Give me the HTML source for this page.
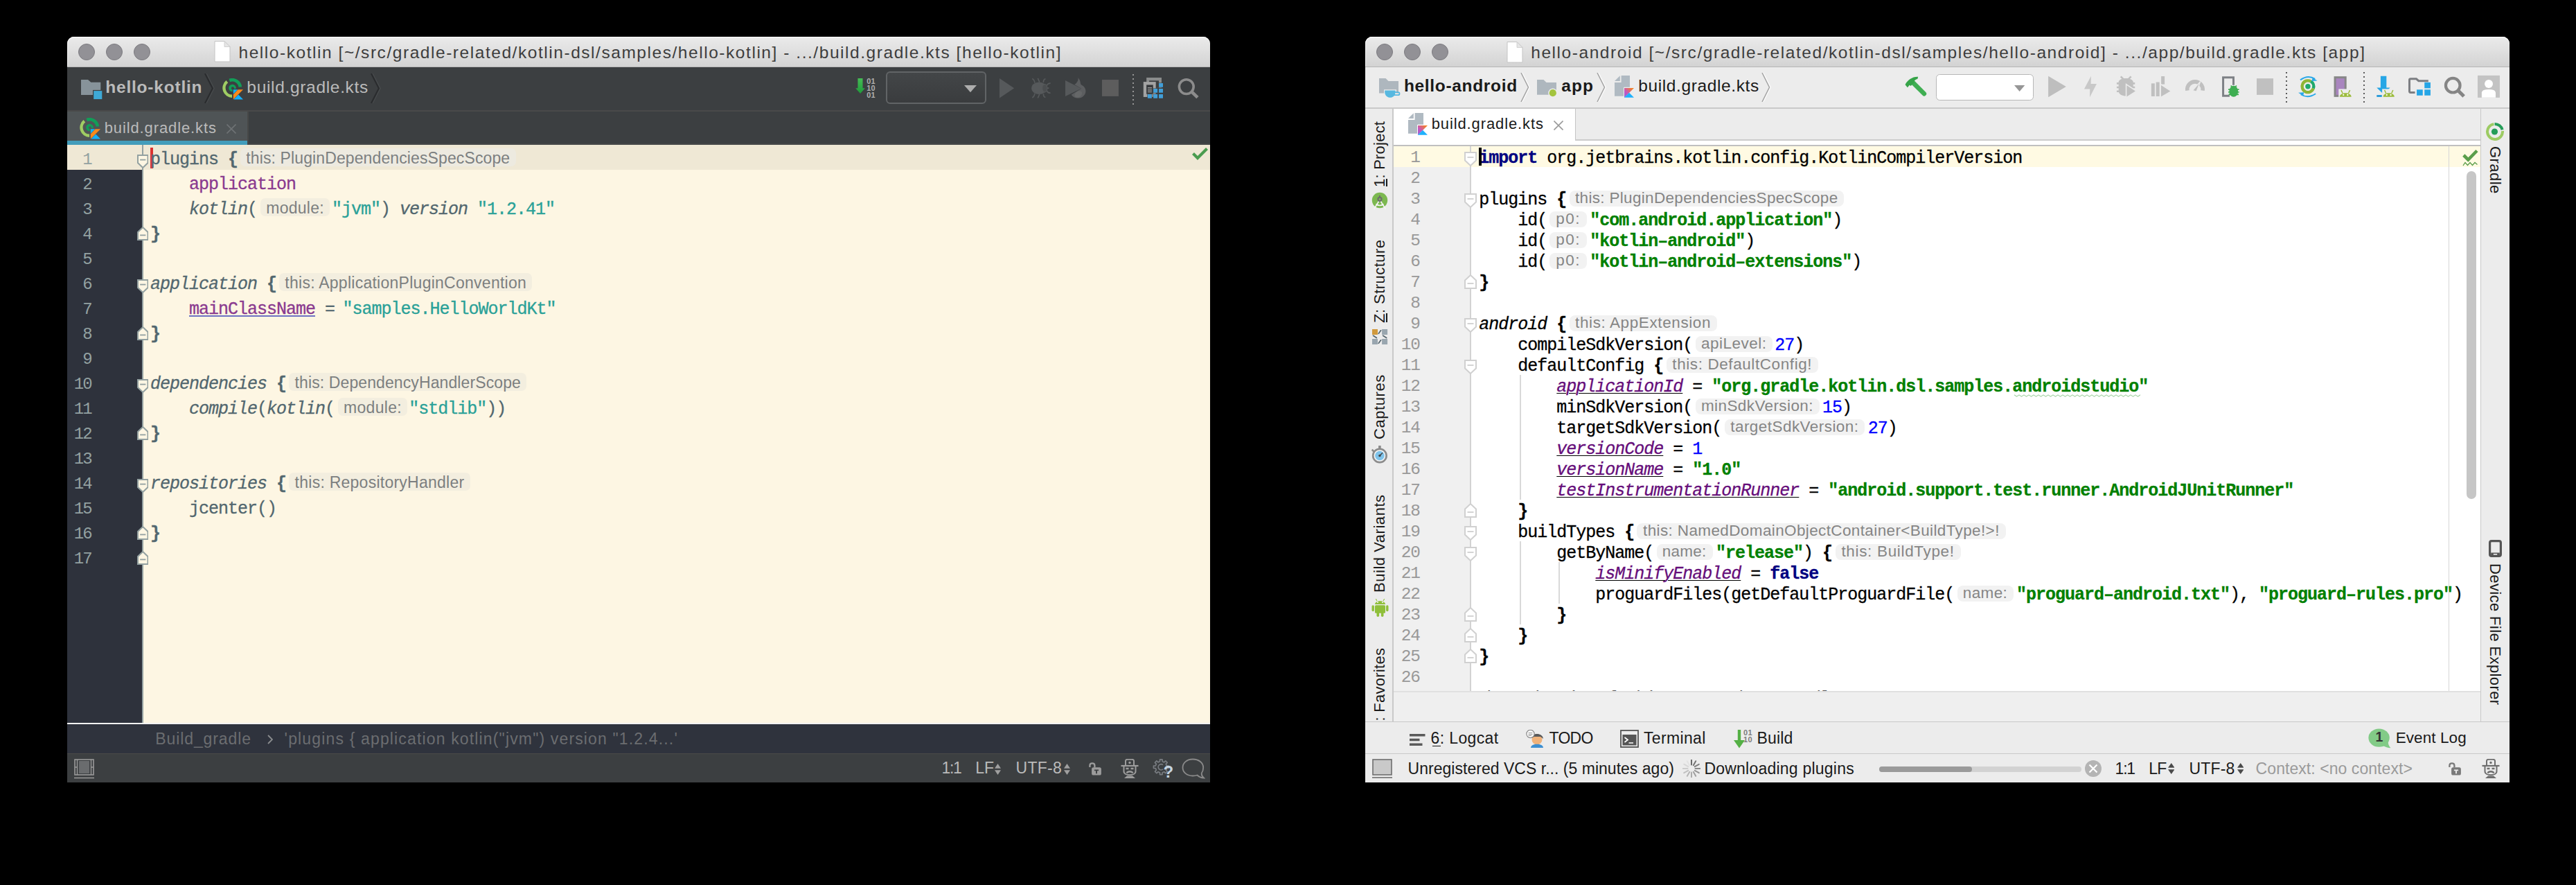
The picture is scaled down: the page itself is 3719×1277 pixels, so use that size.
<!DOCTYPE html>
<html><head><meta charset="utf-8"><title>IDE</title>
<style>
html,body{margin:0;padding:0;background:#000;}
body{width:3719px;height:1277px;position:relative;overflow:hidden;font-family:"Liberation Sans",sans-serif;}
div,span,svg{position:absolute;box-sizing:border-box;}
span{white-space:pre;line-height:1;}
.w{overflow:hidden;}
</style></head><body>
<div class="w" style="left:97px;top:53px;width:1650px;height:1076px;background:#3c3f41;border-radius:10px 10px 0 0;"></div>
<div style="left:97px;top:53px;width:1650px;height:44px;background:linear-gradient(#ebebeb,#d3d3d3);border-radius:10px 10px 0 0;border-bottom:1px solid #b8b8b8;box-shadow:inset 0 1.2px 0 #f8f8f8, inset 1px 0 0 #f2f2f2;"></div>
<div style="left:113px;top:62.7px;width:24px;height:24px;border-radius:50%;background:#929196;border:1.5px solid #7c7b80;"></div>
<div style="left:153px;top:62.7px;width:24px;height:24px;border-radius:50%;background:#929196;border:1.5px solid #7c7b80;"></div>
<div style="left:193px;top:62.7px;width:24px;height:24px;border-radius:50%;background:#929196;border:1.5px solid #7c7b80;"></div>
<svg style="left:309px;top:59px;" width="24" height="31" viewBox="0 0 24 31"><path d="M1 0.5 H15 L23 8.5 V30 H1 Z" fill="#fff" stroke="#c4c4c4" stroke-width="1"/><path d="M15 0.5 V8.5 H23 Z" fill="#e6e6e6" stroke="#c9c9c9" stroke-width="0.8"/></svg>
<span style="left:344.53px;top:64.38px;font-family:'Liberation Sans';font-size:24.5px;color:#3d3d3d;letter-spacing:1.547px;">hello-kotlin [~/src/gradle-related/kotlin-dsl/samples/hello-kotlin] - .../build.gradle.kts [hello-kotlin]</span>
<div style="left:97px;top:97px;width:1650px;height:62px;background:#3c3f41;"></div>
<div style="left:97px;top:159px;width:1650px;height:2px;background:#4a4a4a;"></div>
<svg style="left:116.8px;top:114.9px;" width="31" height="29" viewBox="0 0 31 29"><path d="M0 0 H10 L14.3 3.7 H28.3 V22 H0 Z" fill="#87939a"/><rect x="17" y="14.9" width="14" height="14" fill="#3c3f41"/><rect x="18.2" y="16.1" width="12.1" height="12" fill="#3ea9d6"/></svg>
<span style="left:152.23px;top:113.98px;font-family:'Liberation Sans';font-size:24.5px;color:#bbbbbb;font-weight:700;letter-spacing:0.790px;">hello-kotlin</span>
<svg style="left:294.5px;top:106px;" width="15" height="43" viewBox="0 0 15 43"><path d="M2.6 0 L13.6 21.5 L2.6 43" stroke="#484b4d" stroke-width="2.2" fill="none"/><path d="M1 0 L12 21.5 L1 43" stroke="#2a2c2e" stroke-width="2.2" fill="none"/></svg>
<svg style="left:320.9px;top:112.7px;" width="31" height="31" viewBox="0 0 31 31"><path d="M14.09 25.80 A11.8 11.8 0 0 1 6.87 4.83" stroke="#9fcd63" stroke-width="4.4" fill="none"/><path d="M10.30 3.01 A11.7 11.7 0 0 1 25.91 12.57" stroke="#129d58" stroke-width="4.7" fill="none"/><circle cx="14.5" cy="14.0" r="5.3" fill="#129d58"/><circle cx="14.9" cy="14.2" r="2" fill="#3c3f41"/><rect x="14.600000000000001" y="15.0" width="16.599999999999998" height="16.599999999999998" fill="#3c3f41"/><polygon points="15.8,16.2 22.332,16.2 15.8,22.732" fill="#12b0ff"/><polygon points="22.616,16.2 30.0,16.2 15.8,30.4 15.8,23.584" fill="#f88a1c"/><polygon points="16.368000000000002,30.4 23.184,23.584 30.0,30.4" fill="#12b0ff"/></svg>
<span style="left:356.33px;top:113.98px;font-family:'Liberation Sans';font-size:24.5px;color:#bbbbbb;letter-spacing:0.678px;">build.gradle.kts</span>
<svg style="left:534.5px;top:106px;" width="15" height="43" viewBox="0 0 15 43"><path d="M2.6 0 L13.6 21.5 L2.6 43" stroke="#484b4d" stroke-width="2.2" fill="none"/><path d="M1 0 L12 21.5 L1 43" stroke="#2a2c2e" stroke-width="2.2" fill="none"/></svg>
<svg style="left:1225px;top:98px;" width="522" height="60" viewBox="1225 98 522 60"><defs><linearGradient id="ga" x1="0" y1="0" x2="0" y2="1"><stop offset="0" stop-color="#45bd55"/><stop offset="1" stop-color="#1f9a3a"/></linearGradient></defs><path d="M1238.42 112.91 H1245.5 V127.19 H1248.85 L1242.02 134.89 L1235.19 127.19 H1238.42 Z" fill="url(#ga)"/><path d="M1443.01 112.91 L1464.13 127.19 L1443.01 141.48 Z" fill="#56595b"/><ellipse cx="1500.16" cy="127.19" rx="11" ry="8.8" fill="#56595b"/><ellipse cx="1508.23" cy="127.19" rx="3.6" ry="5.6" fill="#4b4e50" stroke="#56595b" stroke-width="1.2"/><path d="M1493.94 119.74 Q1493.32 114.77 1490.22 113.53 M1500.78 118.5 L1498.29 112.91 M1506.37 119.12 Q1506.37 114.15 1509.47 113.9 M1493.94 134.65 Q1493.32 139.61 1490.22 140.86 M1500.78 135.89 L1498.29 141.48 M1506.37 135.27 Q1506.37 140.24 1509.47 140.48 M1511.34 123.47 Q1512.58 120.11 1516.68 120.11 M1511.96 127.19 H1514.44 M1511.34 130.92 Q1512.58 134.27 1516.68 134.27" stroke="#56595b" stroke-width="1.7" fill="none"/><path d="M1537.93 115.91 L1561.25 127.7 L1537.93 139.05 Z" fill="#56595b"/><path d="M1556.44 111.98 C1561.68 118.09 1558.19 121.58 1562.56 123.33 C1568.67 126.82 1569.55 135.56 1562.56 139.93 C1557.32 142.98 1549.46 141.67 1546.84 136.43 L1561.25 127.7 L1551.2 122.02 C1554.7 119.84 1557.32 116.34 1556.44 111.98 Z" fill="#5c5e60"/><ellipse cx="1556.88" cy="135.99" rx="5.8" ry="4.2" fill="#656768" transform="rotate(-35 1556.88 135.99)"/><rect x="1590.94" y="115.03" width="24.019999999999982" height="23.849999999999994" fill="#5d5d5d"/><path d="M1655.14 118.96 V111.98 H1676.98 V119.84" stroke="#8a8c8c" stroke-width="0" fill="none"/><rect x="1655.14" y="111.98" width="21.839999999999918" height="14.83999999999999" fill="#8a8c8c"/><rect x="1659.07" y="116.34" width="13.980000000000018" height="10.47999999999999" fill="#3c3f41"/><rect x="1650.78" y="118.09" width="17.90000000000009" height="21.840000000000003" fill="#a3a3a3"/><rect x="1655.14" y="122.46" width="9.6099999999999" height="13.269999999999996" fill="#34373a"/><rect x="1656.89" y="125.95" width="6.1099999999999" height="1" fill="#a3a3a3"/><rect x="1656.89" y="128.13" width="6.1099999999999" height="1" fill="#a3a3a3"/><rect x="1656.89" y="130.32" width="6.1099999999999" height="1" fill="#a3a3a3"/><rect x="1656.89" y="132.33" width="6.1099999999999" height="1" fill="#a3a3a3"/><rect x="1672.55" y="119.51" width="6.940000000000055" height="6.769999999999996" fill="#3c3f41"/><rect x="1673.05" y="120.01" width="5.940000000000055" height="5.769999999999996" fill="#419fd9"/><rect x="1664.69" y="127.46" width="6.940000000000055" height="6.760000000000005" fill="#3c3f41"/><rect x="1665.19" y="127.96" width="5.940000000000055" height="5.760000000000005" fill="#419fd9"/><rect x="1672.55" y="127.46" width="6.940000000000055" height="6.760000000000005" fill="#3c3f41"/><rect x="1673.05" y="127.96" width="5.940000000000055" height="5.760000000000005" fill="#419fd9"/><rect x="1656.39" y="135.49" width="6.939999999999827" height="6.769999999999982" fill="#3c3f41"/><rect x="1656.89" y="135.99" width="5.939999999999827" height="5.769999999999982" fill="#419fd9"/><rect x="1664.69" y="135.49" width="6.940000000000055" height="6.769999999999982" fill="#3c3f41"/><rect x="1665.19" y="135.99" width="5.940000000000055" height="5.769999999999982" fill="#419fd9"/><rect x="1672.55" y="135.49" width="6.940000000000055" height="6.769999999999982" fill="#3c3f41"/><rect x="1673.05" y="135.99" width="5.940000000000055" height="5.769999999999982" fill="#419fd9"/><circle cx="1712.79" cy="125.08" r="10.4" stroke="#8c8c8c" stroke-width="3.6" fill="none"/><path d="M1720.21 132.24 L1728.95 140.62" stroke="#8c8c8c" stroke-width="4.6"/></svg>
<span style="left:1251.20px;top:111.82px;font-family:'Liberation Sans';font-size:10.8px;color:#b0b0b0;font-weight:700;letter-spacing:0.392px;">01</span>
<span style="left:1251.20px;top:121.82px;font-family:'Liberation Sans';font-size:10.8px;color:#b0b0b0;font-weight:700;letter-spacing:0.392px;">10</span>
<span style="left:1251.20px;top:131.82px;font-family:'Liberation Sans';font-size:10.8px;color:#b0b0b0;font-weight:700;letter-spacing:0.392px;">01</span>
<div style="left:1278.8px;top:103.2px;width:145.6px;height:47px;border:2px solid #616466;border-radius:6px;background:linear-gradient(#434648,#3a3c3e);"></div>
<svg style="left:1392px;top:122.8px;" width="18" height="10.2" viewBox="0 0 18 10.2"><path d="M0 0 H18 L9 10.2 Z" fill="#adadad"/></svg>
<div style="left:1634.9px;top:106.9px;width:2.2px;height:44.06px;background:repeating-linear-gradient(to bottom,#969696 0,#969696 2.2px,transparent 2.2px,transparent 5.98px);"></div>
<div style="left:97px;top:161px;width:1650px;height:48px;background:#3c3f41;"></div>
<div style="left:97px;top:207.2px;width:1650px;height:1.8px;background:#464848;"></div>
<div style="left:97px;top:161px;width:260.2px;height:42.2px;background:#4f5456;"></div>
<div style="left:357.2px;top:161px;width:2px;height:48px;background:#474848;"></div>
<div style="left:97px;top:203px;width:260.2px;height:6px;background:#439dbb;"></div>
<svg style="left:114.7px;top:170.4px;" width="31" height="31" viewBox="0 0 31 31"><path d="M14.09 25.80 A11.8 11.8 0 0 1 6.87 4.83" stroke="#9fcd63" stroke-width="4.4" fill="none"/><path d="M10.30 3.01 A11.7 11.7 0 0 1 25.91 12.57" stroke="#129d58" stroke-width="4.7" fill="none"/><circle cx="14.5" cy="14.0" r="5.3" fill="#129d58"/><circle cx="14.9" cy="14.2" r="2" fill="#4f5456"/><rect x="14.600000000000001" y="15.0" width="16.599999999999998" height="16.599999999999998" fill="#4f5456"/><polygon points="15.8,16.2 22.332,16.2 15.8,22.732" fill="#12b0ff"/><polygon points="22.616,16.2 30.0,16.2 15.8,30.4 15.8,23.584" fill="#f88a1c"/><polygon points="16.368000000000002,30.4 23.184,23.584 30.0,30.4" fill="#12b0ff"/></svg>
<span style="left:150.68px;top:174.30px;font-family:'Liberation Sans';font-size:22px;color:#bbbbbb;letter-spacing:0.888px;">build.gradle.kts</span>
<svg style="left:327px;top:179.3px;" width="14" height="14" viewBox="0 0 14 14"><path d="M0.5 0.5 L13.5 13.5 M13.5 0.5 L0.5 13.5" stroke="#6e7274" stroke-width="1.7"/></svg>
<div style="left:97px;top:209px;width:109px;height:834px;background:#2e323c;"></div>
<div style="left:206px;top:209px;width:1541px;height:834px;background:#fdf6e3;"></div>
<div style="left:97px;top:209px;width:1650px;height:36px;background:#efe8d5;"></div>
<div style="left:204.8px;top:209px;width:2.2px;height:834px;background:#93a1a1;"></div>
<svg style="left:1721px;top:213px;" width="23" height="18" viewBox="0 0 23 18"><path d="M1.5 8.5 L8 15 L21.5 1.5" stroke="#4a9c4f" stroke-width="4.2" fill="none"/></svg>
<span style="left:119.30px;top:218.96px;font-family:'Liberation Mono';font-size:24px;color:#93a1a1;letter-spacing:-1.806px;">1</span>
<span style="left:119.30px;top:254.96px;font-family:'Liberation Mono';font-size:24px;color:#93a1a1;letter-spacing:-1.806px;">2</span>
<span style="left:119.30px;top:290.96px;font-family:'Liberation Mono';font-size:24px;color:#93a1a1;letter-spacing:-1.806px;">3</span>
<span style="left:119.30px;top:326.96px;font-family:'Liberation Mono';font-size:24px;color:#93a1a1;letter-spacing:-1.806px;">4</span>
<span style="left:119.30px;top:362.96px;font-family:'Liberation Mono';font-size:24px;color:#93a1a1;letter-spacing:-1.806px;">5</span>
<span style="left:119.30px;top:398.96px;font-family:'Liberation Mono';font-size:24px;color:#93a1a1;letter-spacing:-1.806px;">6</span>
<span style="left:119.30px;top:434.96px;font-family:'Liberation Mono';font-size:24px;color:#93a1a1;letter-spacing:-1.806px;">7</span>
<span style="left:119.30px;top:470.96px;font-family:'Liberation Mono';font-size:24px;color:#93a1a1;letter-spacing:-1.806px;">8</span>
<span style="left:119.30px;top:506.96px;font-family:'Liberation Mono';font-size:24px;color:#93a1a1;letter-spacing:-1.806px;">9</span>
<span style="left:106.70px;top:542.96px;font-family:'Liberation Mono';font-size:24px;color:#93a1a1;letter-spacing:-1.806px;">10</span>
<span style="left:106.70px;top:578.96px;font-family:'Liberation Mono';font-size:24px;color:#93a1a1;letter-spacing:-1.806px;">11</span>
<span style="left:106.70px;top:614.96px;font-family:'Liberation Mono';font-size:24px;color:#93a1a1;letter-spacing:-1.806px;">12</span>
<span style="left:106.70px;top:650.96px;font-family:'Liberation Mono';font-size:24px;color:#93a1a1;letter-spacing:-1.806px;">13</span>
<span style="left:106.70px;top:686.96px;font-family:'Liberation Mono';font-size:24px;color:#93a1a1;letter-spacing:-1.806px;">14</span>
<span style="left:106.70px;top:722.96px;font-family:'Liberation Mono';font-size:24px;color:#93a1a1;letter-spacing:-1.806px;">15</span>
<span style="left:106.70px;top:758.96px;font-family:'Liberation Mono';font-size:24px;color:#93a1a1;letter-spacing:-1.806px;">16</span>
<span style="left:106.70px;top:794.96px;font-family:'Liberation Mono';font-size:24px;color:#93a1a1;letter-spacing:-1.806px;">17</span>
<div style="left:217px;top:213.3px;width:4px;height:29.6px;background:#dc322f;"></div>
<span style="left:217.00px;top:218.20px;font-family:'Liberation Mono';font-size:25px;color:#52676f;letter-spacing:-1.004px;-webkit-text-stroke:0.3px;">plugins </span>
<span style="left:329.00px;top:218.20px;font-family:'Liberation Mono';font-size:25px;color:#52676f;font-weight:700;letter-spacing:-1.016px;-webkit-text-stroke:0.3px;">{</span>
<div style="left:347px;top:213.6px;width:397.70000000000005px;height:26.4px;background:#edeae0;border-radius:7px;"></div>
<span style="left:355.32px;top:216.65px;font-family:'Liberation Sans';font-size:23px;color:#7c7f80;letter-spacing:0.112px;">this: PluginDependenciesSpecScope</span>
<span style="left:273.00px;top:254.20px;font-family:'Liberation Mono';font-size:25px;color:#8a3a8f;letter-spacing:-1.003px;-webkit-text-stroke:0.3px;">application</span>
<span style="left:273.00px;top:290.20px;font-family:'Liberation Mono';font-size:25px;color:#52676f;font-style:italic;letter-spacing:-1.003px;-webkit-text-stroke:0.3px;">kotlin</span>
<span style="left:357.00px;top:290.20px;font-family:'Liberation Mono';font-size:25px;color:#52676f;letter-spacing:-1.016px;-webkit-text-stroke:0.3px;">(</span>
<div style="left:375.5px;top:285.6px;width:100.5px;height:26.4px;background:#f3eedf;border-radius:7px;"></div>
<span style="left:384.22px;top:288.65px;font-family:'Liberation Sans';font-size:23px;color:#7c7f80;letter-spacing:0.267px;">module:</span>
<span style="left:478.90px;top:290.20px;font-family:'Liberation Mono';font-size:25px;color:#2aa198;letter-spacing:-1.003px;-webkit-text-stroke:0.3px;">"jvm"</span>
<span style="left:548.90px;top:290.20px;font-family:'Liberation Mono';font-size:25px;color:#52676f;letter-spacing:-1.008px;-webkit-text-stroke:0.3px;">) </span>
<span style="left:576.90px;top:290.20px;font-family:'Liberation Mono';font-size:25px;color:#52676f;font-style:italic;letter-spacing:-1.004px;-webkit-text-stroke:0.3px;">version</span>
<span style="left:688.90px;top:290.20px;font-family:'Liberation Mono';font-size:25px;color:#2aa198;letter-spacing:-1.004px;-webkit-text-stroke:0.3px;">"1.2.41"</span>
<span style="left:217.00px;top:326.20px;font-family:'Liberation Mono';font-size:25px;color:#52676f;font-weight:700;letter-spacing:-1.016px;-webkit-text-stroke:0.3px;">}</span>
<span style="left:217.00px;top:398.20px;font-family:'Liberation Mono';font-size:25px;color:#52676f;font-style:italic;letter-spacing:-1.003px;-webkit-text-stroke:0.3px;">application</span>
<span style="left:385.00px;top:398.20px;font-family:'Liberation Mono';font-size:25px;color:#52676f;font-weight:700;letter-spacing:-1.016px;-webkit-text-stroke:0.3px;">{</span>
<div style="left:403px;top:393.6px;width:365.20000000000005px;height:26.4px;background:#f3eedf;border-radius:7px;"></div>
<span style="left:411.32px;top:396.65px;font-family:'Liberation Sans';font-size:23px;color:#7c7f80;letter-spacing:0.263px;">this: ApplicationPluginConvention</span>
<span style="left:273.00px;top:434.20px;font-family:'Liberation Mono';font-size:25px;color:#8a3a8f;letter-spacing:-1.004px;-webkit-text-stroke:0.3px;text-decoration:underline;text-decoration-color:#6c71c4;text-decoration-thickness:2px;text-underline-offset:2px;">mainClassName</span>
<span style="left:455.00px;top:434.20px;font-family:'Liberation Mono';font-size:25px;color:#52676f;letter-spacing:-1.005px;-webkit-text-stroke:0.3px;"> = </span>
<span style="left:494.50px;top:434.20px;font-family:'Liberation Mono';font-size:25px;color:#2aa198;letter-spacing:-1.003px;-webkit-text-stroke:0.3px;">"samples.HelloWorldKt"</span>
<span style="left:217.00px;top:470.20px;font-family:'Liberation Mono';font-size:25px;color:#52676f;font-weight:700;letter-spacing:-1.016px;-webkit-text-stroke:0.3px;">}</span>
<span style="left:217.00px;top:542.20px;font-family:'Liberation Mono';font-size:25px;color:#52676f;font-style:italic;letter-spacing:-1.003px;-webkit-text-stroke:0.3px;">dependencies</span>
<span style="left:399.00px;top:542.20px;font-family:'Liberation Mono';font-size:25px;color:#52676f;font-weight:700;letter-spacing:-1.016px;-webkit-text-stroke:0.3px;">{</span>
<div style="left:417px;top:537.6px;width:343px;height:26.4px;background:#f3eedf;border-radius:7px;"></div>
<span style="left:425.62px;top:540.65px;font-family:'Liberation Sans';font-size:23px;color:#7c7f80;letter-spacing:0.101px;">this: DependencyHandlerScope</span>
<span style="left:273.00px;top:578.20px;font-family:'Liberation Mono';font-size:25px;color:#52676f;font-style:italic;letter-spacing:-1.004px;-webkit-text-stroke:0.3px;">compile</span>
<span style="left:371.00px;top:578.20px;font-family:'Liberation Mono';font-size:25px;color:#52676f;letter-spacing:-1.016px;-webkit-text-stroke:0.3px;">(</span>
<span style="left:385.00px;top:578.20px;font-family:'Liberation Mono';font-size:25px;color:#52676f;font-style:italic;letter-spacing:-1.003px;-webkit-text-stroke:0.3px;">kotlin</span>
<span style="left:469.00px;top:578.20px;font-family:'Liberation Mono';font-size:25px;color:#52676f;letter-spacing:-1.016px;-webkit-text-stroke:0.3px;">(</span>
<div style="left:487.6px;top:573.6px;width:100.39999999999998px;height:26.4px;background:#f3eedf;border-radius:7px;"></div>
<span style="left:496.12px;top:576.65px;font-family:'Liberation Sans';font-size:23px;color:#7c7f80;letter-spacing:0.282px;">module:</span>
<span style="left:590.30px;top:578.20px;font-family:'Liberation Mono';font-size:25px;color:#2aa198;letter-spacing:-1.004px;-webkit-text-stroke:0.3px;">"stdlib"</span>
<span style="left:702.30px;top:578.20px;font-family:'Liberation Mono';font-size:25px;color:#52676f;letter-spacing:-1.008px;-webkit-text-stroke:0.3px;">))</span>
<span style="left:217.00px;top:614.20px;font-family:'Liberation Mono';font-size:25px;color:#52676f;font-weight:700;letter-spacing:-1.016px;-webkit-text-stroke:0.3px;">}</span>
<span style="left:217.00px;top:686.20px;font-family:'Liberation Mono';font-size:25px;color:#52676f;font-style:italic;letter-spacing:-1.003px;-webkit-text-stroke:0.3px;">repositories</span>
<span style="left:399.00px;top:686.20px;font-family:'Liberation Mono';font-size:25px;color:#52676f;font-weight:700;letter-spacing:-1.016px;-webkit-text-stroke:0.3px;">{</span>
<div style="left:417px;top:681.6px;width:261.5px;height:26.4px;background:#f3eedf;border-radius:7px;"></div>
<span style="left:425.62px;top:684.65px;font-family:'Liberation Sans';font-size:23px;color:#7c7f80;letter-spacing:0.249px;">this: RepositoryHandler</span>
<span style="left:273.00px;top:722.20px;font-family:'Liberation Mono';font-size:25px;color:#52676f;letter-spacing:-1.003px;-webkit-text-stroke:0.3px;">jcenter()</span>
<span style="left:217.00px;top:758.20px;font-family:'Liberation Mono';font-size:25px;color:#52676f;font-weight:700;letter-spacing:-1.016px;-webkit-text-stroke:0.3px;">}</span>
<svg style="left:197.75px;top:223.0px;" width="16.5" height="20" viewBox="0 0 16.5 20"><path d="M1 1 H15.5 V12.0 L8.25 19 L1 12.0 Z" fill="#fdf6e3" stroke="#93a1a1" stroke-width="2"/><path d="M4.125 7.6 H12.375" stroke="#93a1a1" stroke-width="1.8"/></svg>
<svg style="left:197.75px;top:403.0px;" width="16.5" height="20" viewBox="0 0 16.5 20"><path d="M1 1 H15.5 V12.0 L8.25 19 L1 12.0 Z" fill="#fdf6e3" stroke="#93a1a1" stroke-width="2"/><path d="M4.125 7.6 H12.375" stroke="#93a1a1" stroke-width="1.8"/></svg>
<svg style="left:197.75px;top:547.0px;" width="16.5" height="20" viewBox="0 0 16.5 20"><path d="M1 1 H15.5 V12.0 L8.25 19 L1 12.0 Z" fill="#fdf6e3" stroke="#93a1a1" stroke-width="2"/><path d="M4.125 7.6 H12.375" stroke="#93a1a1" stroke-width="1.8"/></svg>
<svg style="left:197.75px;top:691.0px;" width="16.5" height="20" viewBox="0 0 16.5 20"><path d="M1 1 H15.5 V12.0 L8.25 19 L1 12.0 Z" fill="#fdf6e3" stroke="#93a1a1" stroke-width="2"/><path d="M4.125 7.6 H12.375" stroke="#93a1a1" stroke-width="1.8"/></svg>
<svg style="left:197.75px;top:327.3px;" width="16.5" height="20" viewBox="0 0 16.5 20"><path d="M1 19 H15.5 V8.0 L8.25 1 L1 8.0 Z" fill="#fdf6e3" stroke="#93a1a1" stroke-width="2"/><path d="M4.125 12.4 H12.375" stroke="#93a1a1" stroke-width="1.8"/></svg>
<svg style="left:197.75px;top:471.3px;" width="16.5" height="20" viewBox="0 0 16.5 20"><path d="M1 19 H15.5 V8.0 L8.25 1 L1 8.0 Z" fill="#fdf6e3" stroke="#93a1a1" stroke-width="2"/><path d="M4.125 12.4 H12.375" stroke="#93a1a1" stroke-width="1.8"/></svg>
<svg style="left:197.75px;top:615.3px;" width="16.5" height="20" viewBox="0 0 16.5 20"><path d="M1 19 H15.5 V8.0 L8.25 1 L1 8.0 Z" fill="#fdf6e3" stroke="#93a1a1" stroke-width="2"/><path d="M4.125 12.4 H12.375" stroke="#93a1a1" stroke-width="1.8"/></svg>
<svg style="left:197.75px;top:759.3px;" width="16.5" height="20" viewBox="0 0 16.5 20"><path d="M1 19 H15.5 V8.0 L8.25 1 L1 8.0 Z" fill="#fdf6e3" stroke="#93a1a1" stroke-width="2"/><path d="M4.125 12.4 H12.375" stroke="#93a1a1" stroke-width="1.8"/></svg>
<svg style="left:197.75px;top:795.3px;" width="16.5" height="20" viewBox="0 0 16.5 20"><path d="M1 19 H15.5 V8.0 L8.25 1 L1 8.0 Z" fill="#fdf6e3" stroke="#93a1a1" stroke-width="2"/><path d="M4.125 12.4 H12.375" stroke="#93a1a1" stroke-width="1.8"/></svg>
<div style="left:97px;top:1043px;width:1650px;height:2px;background:#f2f2f2;"></div>
<div style="left:97px;top:1045px;width:1650px;height:42px;background:#2f333d;"></div>
<span style="left:224.32px;top:1055.05px;font-family:'Liberation Sans';font-size:23px;color:#6b6d70;letter-spacing:0.894px;">Build_gradle</span>
<svg style="left:386px;top:1060px;" width="8" height="14" viewBox="0 0 8 14"><path d="M1 1 L7 7 L1 13" stroke="#8a8c8e" stroke-width="1.8" fill="none"/></svg>
<span style="left:410.62px;top:1055.05px;font-family:'Liberation Sans';font-size:23px;color:#6b6d70;letter-spacing:1.151px;">'plugins { application kotlin("jvm") version "1.2.4...'</span>
<div style="left:97px;top:1087px;width:1650px;height:42px;background:#3c3f41;"></div>
<div style="left:97px;top:1086.5px;width:1650px;height:1.5px;background:#4a4a48;"></div>
<svg style="left:106.5px;top:1094.5px;" width="29" height="29" viewBox="0 0 29 29"><rect x="1" y="1" width="27" height="22" fill="none" stroke="#9a9a9a" stroke-width="1.6"/><rect x="7" y="3" width="15" height="18" fill="#6a6c6e"/><path d="M4.5 1 V23 M24.5 1 V23 M1 12 H5 M24 12 H28 M0 27.5 H29" stroke="#9a9a9a" stroke-width="1.4"/></svg>
<span style="left:1359.62px;top:1097.45px;font-family:'Liberation Sans';font-size:23px;color:#bbbbbb;letter-spacing:-1.428px;">1:1</span>
<span style="left:1408.32px;top:1097.45px;font-family:'Liberation Sans';font-size:23px;color:#bbbbbb;letter-spacing:-0.122px;">LF</span>
<svg style="left:1436px;top:1101.5px;" width="9" height="16" viewBox="0 0 9 16"><path d="M0 6.72 L4.5 0 L9 6.72 Z M0 9.28 L4.5 16 L9 9.28 Z" fill="#a0a0a0"/></svg>
<span style="left:1466.62px;top:1097.45px;font-family:'Liberation Sans';font-size:23px;color:#bbbbbb;letter-spacing:0.226px;">UTF-8</span>
<svg style="left:1535.5px;top:1101.5px;" width="9" height="16" viewBox="0 0 9 16"><path d="M0 6.72 L4.5 0 L9 6.72 Z M0 9.28 L4.5 16 L9 9.28 Z" fill="#a0a0a0"/></svg>
<svg style="left:1570px;top:1098px;" width="24" height="24" viewBox="1570 1098 24 24"><path d="M1573.4 1107 V1104.6 C1573.4 1100.4 1580.4 1100.4 1580.4 1104.6 V1107.6" stroke="#9c9c9c" stroke-width="2.3" fill="none"/><rect x="1576.1" y="1107.3" width="13.8" height="11.3" rx="2.6" fill="#9c9c9c"/><path d="M1579.9 1111.4 H1586.1 M1583 1111.4 V1116.2" stroke="#3c3f41" stroke-width="1.9"/></svg>
<svg style="left:1618px;top:1094.5px;" width="26" height="29" viewBox="0 0 26 29"><path d="M7 9 V3 C7 1 8 0.8 10 0.8 H16 C18 0.8 19 1 19 3 V9" stroke="#9c9c9c" stroke-width="2" fill="none"/><circle cx="13" cy="5.5" r="1.7" fill="#9c9c9c"/><path d="M0.5 10 H25.5" stroke="#9c9c9c" stroke-width="2.2"/><path d="M4.5 11 V18 C4.5 25 21.5 25 21.5 18 V11" stroke="#9c9c9c" stroke-width="2" fill="none"/><path d="M7.5 14 H11.5 M14.5 14 H18.5" stroke="#9c9c9c" stroke-width="2.4"/><path d="M8.5 20.5 C10 17.5 16 17.5 17.5 20.5" stroke="#9c9c9c" stroke-width="2.4" fill="none"/><path d="M5 28 L9 24.5 H17 L21 28 Z" fill="#9c9c9c"/></svg>
<svg style="left:1662px;top:1093px;" width="30" height="30" viewBox="1662 1093 30 30"><polygon points="1684.29,1104.96 1687.16,1105.08 1687.16,1108.52 1684.29,1108.64 1683.25,1111.15 1685.20,1113.27 1682.77,1115.70 1680.65,1113.75 1678.14,1114.79 1678.02,1117.66 1674.58,1117.66 1674.46,1114.79 1671.95,1113.75 1669.83,1115.70 1667.40,1113.27 1669.35,1111.15 1668.31,1108.64 1665.44,1108.52 1665.44,1105.08 1668.31,1104.96 1669.35,1102.45 1667.40,1100.33 1669.83,1097.90 1671.95,1099.85 1674.46,1098.81 1674.58,1095.94 1678.02,1095.94 1678.14,1098.81 1680.65,1099.85 1682.77,1097.90 1685.20,1100.33 1683.25,1102.45" fill="none" stroke="#787c81" stroke-width="1.7" stroke-linejoin="round"/><path d="M1678.94 1109.94 A4.1 4.1 0 1 1 1678.94 1103.66" stroke="#787c81" stroke-width="1.7" fill="none"/></svg>
<span style="left:1679.60px;top:1102.40px;font-family:'Liberation Sans';font-size:24px;color:#c5d4e0;font-weight:700;letter-spacing:-2.072px;">?</span>
<svg style="left:1706px;top:1094px;" width="34" height="30" viewBox="0 0 34 30"><path d="M16 1.5 C7 1.5 1.5 7 1.5 13.5 C1.5 20 7 25.5 16 25.5 C18.5 25.5 20.5 25.2 22.5 24.5 C25 27 28 28.3 32 28.5 C29.5 26.5 28.5 24 28.8 21.5 C30.5 19.3 31.2 16.5 31.2 13.5 C31.2 7 25 1.5 16 1.5 Z" stroke="#8a8a8a" stroke-width="1.8" fill="none"/></svg>
<div class="w" style="left:1971px;top:53px;width:1652px;height:1076px;background:#ececec;border-radius:10px 10px 0 0;"></div>
<div style="left:1971px;top:53px;width:1652px;height:43.5px;background:linear-gradient(#ebebeb,#d3d3d3);border-radius:10px 10px 0 0;border-bottom:1px solid #b5b5b5;box-shadow:inset 0 1.2px 0 #f8f8f8, inset 1px 0 0 #f2f2f2;"></div>
<div style="left:1987px;top:62.7px;width:24px;height:24px;border-radius:50%;background:#929196;border:1.5px solid #7c7b80;"></div>
<div style="left:2027px;top:62.7px;width:24px;height:24px;border-radius:50%;background:#929196;border:1.5px solid #7c7b80;"></div>
<div style="left:2067px;top:62.7px;width:24px;height:24px;border-radius:50%;background:#929196;border:1.5px solid #7c7b80;"></div>
<svg style="left:2175px;top:59.5px;" width="24" height="31" viewBox="0 0 24 31"><path d="M1 0.5 H15 L23 8.5 V30 H1 Z" fill="#fff" stroke="#c4c4c4" stroke-width="1"/><path d="M15 0.5 V8.5 H23 Z" fill="#e6e6e6" stroke="#c9c9c9" stroke-width="0.8"/></svg>
<span style="left:2210.23px;top:64.38px;font-family:'Liberation Sans';font-size:24.5px;color:#3d3d3d;letter-spacing:1.556px;">hello-android [~/src/gradle-related/kotlin-dsl/samples/hello-android] - .../app/build.gradle.kts [app]</span>
<div style="left:1971px;top:96.5px;width:1652px;height:59.5px;background:#ececec;"></div>
<div style="left:1971px;top:155px;width:1652px;height:1.5px;background:#c9c9c9;"></div>
<svg style="left:1990.9px;top:113.2px;" width="31" height="29" viewBox="0 0 31 29"><path d="M0 0 H9.5 L13.5 4 H28 V21.5 H0 Z" fill="#aeb7be"/><path d="M7 16.2 H25 V19 C25 26 20 28.6 16 28.6 C11 28.6 7 26 7 19 Z" fill="#ececec"/><path d="M8.2 17.6 H23.6 V19.5 C23.6 25 20 27.8 16 27.8 C12 27.8 8.2 25 8.2 19.5 Z" fill="#57b8e0"/><path d="M23 20.2 H27.3 C30.3 20.2 30.3 24.2 27.3 24.2 H22" stroke="#57b8e0" stroke-width="1.7" fill="none"/></svg>
<span style="left:2026.93px;top:111.98px;font-family:'Liberation Sans';font-size:24.5px;color:#1a1a1a;font-weight:700;letter-spacing:0.668px;">hello-android</span>
<svg style="left:2195px;top:104.5px;" width="14.5" height="42" viewBox="0 0 14.5 42"><path d="M2.6 0 L13.1 21.0 L2.6 42" stroke="#fbfbfb" stroke-width="1.5" fill="none"/><path d="M1 0 L11.5 21.0 L1 42" stroke="#a3a3a3" stroke-width="1.5" fill="none"/></svg>
<svg style="left:2219px;top:114.8px;" width="30" height="28" viewBox="0 0 30 28"><path d="M0 0 H9.5 L13.5 4 H28 V21.8 H0 Z" fill="#aeb7be"/><circle cx="22.8" cy="19.2" r="6.6" fill="#ececec"/><circle cx="22.8" cy="19.2" r="5.1" fill="#a3c43e"/></svg>
<span style="left:2254.23px;top:111.98px;font-family:'Liberation Sans';font-size:24.5px;color:#1a1a1a;font-weight:700;letter-spacing:1.063px;">app</span>
<svg style="left:2305px;top:104.5px;" width="14.5" height="42" viewBox="0 0 14.5 42"><path d="M2.6 0 L13.1 21.0 L2.6 42" stroke="#fbfbfb" stroke-width="1.5" fill="none"/><path d="M1 0 L11.5 21.0 L1 42" stroke="#a3a3a3" stroke-width="1.5" fill="none"/></svg>
<svg style="left:2330.7px;top:109px;" width="29" height="32" viewBox="0 0 29 32"><path d="M9.6 0 H22 V16.8 H13.7 V29.8 H0 V10 H9.6 Z" fill="#b0bac2"/><path d="M7.8 0.3 V8.1 H0 Z" fill="#b0bac2"/><rect x="13" y="17" width="16" height="15" fill="#ececec"/><defs><linearGradient id="kg" x1="1" y1="0" x2="0" y2="1"><stop offset="0.1" stop-color="#f58220"/><stop offset="0.6" stop-color="#c757bc"/><stop offset="1" stop-color="#8f67e0"/></linearGradient></defs><polygon points="14,18 28,18 14,32" fill="url(#kg)"/><polygon points="14,31.7 21,24.7 28,31.7" fill="#1eb1fc"/></svg>
<span style="left:2365.23px;top:111.98px;font-family:'Liberation Sans';font-size:24.5px;color:#1a1a1a;letter-spacing:0.616px;">build.gradle.kts</span>
<svg style="left:2543px;top:104.5px;" width="14.5" height="42" viewBox="0 0 14.5 42"><path d="M2.6 0 L13.1 21.0 L2.6 42" stroke="#fbfbfb" stroke-width="1.5" fill="none"/><path d="M1 0 L11.5 21.0 L1 42" stroke="#a3a3a3" stroke-width="1.5" fill="none"/></svg>
<svg style="left:2740px;top:98px;" width="883" height="60" viewBox="2740 98 883 60"><path d="M2760.5 117.88 L2777.89 135.27" stroke="#3fae52" stroke-width="6.6" stroke-linecap="round"/><path d="M2750.56 122.22 C2753.66 115.39 2761.12 110.42 2769.19 110.8 L2768.32 113.9 C2764.84 114.77 2762.98 116.63 2763.6 119.12 L2758.63 124.09 L2756.77 122.84 L2753.91 126.32 Z" fill="#36a449"/><path d="M2957.14 109.8 L2982.86 124.96 L2957.14 140.24 Z" fill="#bebebe"/><path d="M3018.88 109.8 L3008.94 128.43 H3017.27 L3017.02 140.24 L3026.96 120.98 H3018.63 Z" fill="#c8c8c8"/><path d="M3058.63 118.5 C3058.63 111.04 3079.75 111.04 3079.75 118.5 V131.54 C3079.75 140.86 3058.63 140.86 3058.63 131.54 Z" fill="#c0c0c0"/><path d="M3061.74 110.42 L3066.71 115.39 M3076.65 110.42 L3071.68 115.39" stroke="#c0c0c0" stroke-width="2.6"/><path d="M3055.9 120.36 H3082.24 M3055.9 125.95 H3082.24 M3055.9 131.79 H3082.24" stroke="#c0c0c0" stroke-width="2.6"/><path d="M3069.57 121.6 L3084.47 131.54 L3069.57 140.86 Z" fill="#c0c0c0" stroke="#ececec" stroke-width="1.6"/><rect x="3105.84" y="120.36" width="5" height="18.63000000000001" fill="#c0c0c0"/><rect x="3112.67" y="118.5" width="5" height="20.49000000000001" fill="#c0c0c0"/><rect x="3120.12" y="110.05" width="5" height="11.549999999999997" fill="#c0c0c0"/><path d="M3119.25 121.6 L3134.66 131.54 L3119.25 140.61 Z" fill="#c0c0c0" stroke="#ececec" stroke-width="1.4"/><path d="M3157.85 130.62 A11.2 11.2 0 1 1 3180.03 130.62" stroke="#c0c0c0" stroke-width="5.6" fill="none"/><path d="M3165.47 130.55 L3176.65 117.63 L3171.06 132.16 Z" fill="#c0c0c0" stroke="#ececec" stroke-width="1.4"/><path d="M3224.47 122.84 V111.66 H3209.57 V138.37 H3218.88" stroke="#7d8085" stroke-width="3" fill="none"/><ellipse cx="3224.72" cy="131.79" rx="6.4" ry="8" fill="#3fae52"/><path d="M3220.75 123.47 L3222.61 125.95 M3228.82 123.47 L3226.96 125.95 M3217.02 129.06 H3232.55 M3217.02 132.78 H3232.55 M3217.64 136.26 H3231.93" stroke="#3fae52" stroke-width="1.8"/><rect x="3258.01" y="113.16" width="23.979999999999563" height="23.72" fill="#c0c0c0"/><path d="M3339.82 127.58 A8.4 8.4 0 1 1 3336.13 117.44" stroke="#8fb535" stroke-width="4.3" fill="none"/><path d="M3336.13 117.44 A8.4 8.4 0 0 1 3339.82 127.58" stroke="#1fa86b" stroke-width="4.3" fill="none"/><circle cx="3331.93" cy="124.71" r="3.7" fill="#1fa86b"/><path d="M3320.99 115.39 Q3331.93 107.32 3342.11 113.9" stroke="#29a8e8" stroke-width="2" fill="none"/><path d="M3338.76 111.91 L3345.59 116.39 L3337.52 116.88 Z" fill="#29a8e8"/><path d="M3343.11 135.27 Q3331.93 142.72 3321.74 136.26" stroke="#29a8e8" stroke-width="2" fill="none"/><path d="M3325.09 138.0 L3318.01 133.78 L3326.34 133.16 Z" fill="#29a8e8"/><rect x="3371.06" y="111.66" width="15.150000000000091" height="26.710000000000008" fill="#a985bf" stroke="#878787" stroke-width="3"/><rect x="3376.27" y="128.43" width="20" height="13" fill="#ececec"/><path d="M3377.89 139.86 C3377.89 132.5025 3394.66 132.5025 3394.66 139.86 Z" fill="#9bbb3b"/><path d="M3382.0825 134.46450000000002 L3379.9024 130.05 M3390.4674999999997 134.46450000000002 L3392.6476 130.05" stroke="#9bbb3b" stroke-width="1.5"/><circle cx="3383.2563999999998" cy="136.917" r="1.1" fill="#fff"/><circle cx="3389.2936" cy="136.917" r="1.1" fill="#fff"/><path d="M3436.89 109.8 H3445.34 V126.57 H3450.56 L3441.12 135.89 L3431.3 126.57 H3436.89 Z" fill="#27a6e5"/><rect x="3431.3" y="137.13" width="7.460000000000036" height="2.730000000000018" fill="#1e96d8"/><rect x="3439.13" y="128.43" width="20" height="13" fill="#ececec"/><path d="M3440.62 139.86 C3440.62 132.5025 3456.77 132.5025 3456.77 139.86 Z" fill="#9bbb3b"/><path d="M3444.6575 134.46450000000002 L3442.558 130.05 M3452.7325 134.46450000000002 L3454.832 130.05" stroke="#9bbb3b" stroke-width="1.5"/><circle cx="3445.788" cy="136.917" r="1.1" fill="#fff"/><circle cx="3451.602" cy="136.917" r="1.1" fill="#fff"/><path d="M3486.58 133.4 H3480.12 Q3478.51 133.4 3478.51 131.54 V115.39 Q3478.51 113.78 3480.37 113.78 H3488.45 L3491.8 116.63 H3505.84" stroke="#7c7e82" stroke-width="3" fill="none"/><rect x="3500.25" y="118.87" width="8.690000000000055" height="8.449999999999989" fill="#25a5e6"/><rect x="3489.07" y="129.3" width="8.690000000000055" height="8.449999999999989" fill="#25a5e6"/><rect x="3500.25" y="129.3" width="8.690000000000055" height="8.449999999999989" fill="#25a5e6"/><circle cx="3541.24" cy="123.22" r="10.3" stroke="#858585" stroke-width="4.2" fill="none"/><path d="M3549.32 131.29 L3557.14 138.99" stroke="#858585" stroke-width="5"/><rect x="3577.02" y="108.93" width="31.920000000000073" height="31.930000000000007" fill="#c3c3c3"/><circle cx="3593.04" cy="120.98" r="6" fill="#fff"/><path d="M3582.86 140.86 V133.4 Q3583.48 129.06 3593.04 129.06 Q3602.36 129.06 3602.98 133.4 V140.86 Z" fill="#fff"/></svg>
<div style="left:2795.3px;top:107px;width:141.2px;height:37.8px;border:1.5px solid #b7b7b7;border-radius:5.5px;background:#fff;"></div>
<svg style="left:2908.3px;top:122.8px;" width="15.3" height="9" viewBox="0 0 15.3 9"><path d="M0 0 H15.3 L7.65 9 Z" fill="#969696"/></svg>
<div style="left:3299.9px;top:103.7px;width:2.2px;height:44.410000000000004px;background:repeating-linear-gradient(to bottom,#5a5a5a 0,#5a5a5a 2.2px,transparent 2.2px,transparent 6.03px);"></div>
<div style="left:3412.1px;top:103.7px;width:2.2px;height:44.410000000000004px;background:repeating-linear-gradient(to bottom,#5a5a5a 0,#5a5a5a 2.2px,transparent 2.2px,transparent 6.03px);"></div>
<div style="left:1971px;top:156.5px;width:41px;height:885px;background:#ececec;"></div>
<div style="left:2010.2px;top:156.5px;width:1.8px;height:885px;background:#c9c9c9;"></div>
<div style="left:3581px;top:156.5px;width:42px;height:885px;background:#ececec;"></div>
<div style="left:3580.5px;top:156.5px;width:1.8px;height:885px;background:#c9c9c9;"></div>
<div style="left:2012px;top:156.5px;width:1569px;height:54.5px;background:#ececec;"></div>
<div style="left:2012px;top:156.5px;width:262px;height:46px;background:#ffffff;"></div>
<div style="left:2273.5px;top:156.5px;width:1.5px;height:46px;background:#c4c4c4;"></div>
<div style="left:2274px;top:201px;width:1307px;height:2px;background:#cbcbcb;"></div>
<div style="left:2012px;top:203px;width:1569px;height:6.3px;background:#ffffff;"></div>
<div style="left:2012px;top:209.3px;width:1569px;height:1.7px;background:#c0c0c0;"></div>
<svg style="left:2032.8px;top:163px;" width="29" height="32" viewBox="0 0 29 32"><path d="M9.6 0 H22 V16.8 H13.7 V29.8 H0 V10 H9.6 Z" fill="#b0bac2"/><path d="M7.8 0.3 V8.1 H0 Z" fill="#b0bac2"/><rect x="13" y="17" width="16" height="15" fill="#ffffff"/><defs><linearGradient id="kg" x1="1" y1="0" x2="0" y2="1"><stop offset="0.1" stop-color="#f58220"/><stop offset="0.6" stop-color="#c757bc"/><stop offset="1" stop-color="#8f67e0"/></linearGradient></defs><polygon points="14,18 28,18 14,32" fill="url(#kg)"/><polygon points="14,31.7 21,24.7 28,31.7" fill="#1eb1fc"/></svg>
<span style="left:2066.68px;top:167.90px;font-family:'Liberation Sans';font-size:22px;color:#1a1a1a;letter-spacing:0.888px;">build.gradle.kts</span>
<svg style="left:2243px;top:173.5px;" width="14" height="14" viewBox="0 0 14 14"><path d="M0.5 0.5 L13.5 13.5 M13.5 0.5 L0.5 13.5" stroke="#9a9a9a" stroke-width="1.6"/></svg>
<div style="left:2012px;top:211px;width:1569px;height:786px;background:#ffffff;"></div>
<div style="left:2012px;top:211px;width:111px;height:786px;background:#f0f0f0;"></div>
<div style="left:2012px;top:211px;width:1569px;height:30px;background:#fffae3;"></div>
<div style="left:2122.3px;top:211px;width:1.8px;height:786px;background:#d2d2d2;"></div>
<div style="left:3534.5px;top:211px;width:1.8px;height:786px;background:#d6d6d6;"></div>
<div style="left:3561px;top:247px;width:14px;height:473px;background:#c6c6c6;border-radius:7px;"></div>
<svg style="left:3554.5px;top:214.5px;" width="23" height="25" viewBox="0 0 23 25"><path d="M1.8 9 L8.3 15.5 L21 2.5" stroke="#5a9e4b" stroke-width="4.6" fill="none"/><path d="M1 24 L4 19.5 L7.5 23.5 L11 19.5 L14.5 23.5 L18 19.5 L21.5 22.5" stroke="#5a9e4b" stroke-width="1.3" fill="none"/></svg>
<span style="left:2036.20px;top:216.38px;font-family:'Liberation Mono';font-size:24.5px;color:#999999;letter-spacing:-1.303px;">1</span>
<span style="left:2036.20px;top:246.38px;font-family:'Liberation Mono';font-size:24.5px;color:#999999;letter-spacing:-1.303px;">2</span>
<span style="left:2036.20px;top:276.38px;font-family:'Liberation Mono';font-size:24.5px;color:#999999;letter-spacing:-1.303px;">3</span>
<span style="left:2036.20px;top:306.38px;font-family:'Liberation Mono';font-size:24.5px;color:#999999;letter-spacing:-1.303px;">4</span>
<span style="left:2036.20px;top:336.38px;font-family:'Liberation Mono';font-size:24.5px;color:#999999;letter-spacing:-1.303px;">5</span>
<span style="left:2036.20px;top:366.38px;font-family:'Liberation Mono';font-size:24.5px;color:#999999;letter-spacing:-1.303px;">6</span>
<span style="left:2036.20px;top:396.38px;font-family:'Liberation Mono';font-size:24.5px;color:#999999;letter-spacing:-1.303px;">7</span>
<span style="left:2036.20px;top:426.38px;font-family:'Liberation Mono';font-size:24.5px;color:#999999;letter-spacing:-1.303px;">8</span>
<span style="left:2036.20px;top:456.38px;font-family:'Liberation Mono';font-size:24.5px;color:#999999;letter-spacing:-1.303px;">9</span>
<span style="left:2022.80px;top:486.38px;font-family:'Liberation Mono';font-size:24.5px;color:#999999;letter-spacing:-1.303px;">10</span>
<span style="left:2022.80px;top:516.38px;font-family:'Liberation Mono';font-size:24.5px;color:#999999;letter-spacing:-1.303px;">11</span>
<span style="left:2022.80px;top:546.38px;font-family:'Liberation Mono';font-size:24.5px;color:#999999;letter-spacing:-1.303px;">12</span>
<span style="left:2022.80px;top:576.38px;font-family:'Liberation Mono';font-size:24.5px;color:#999999;letter-spacing:-1.303px;">13</span>
<span style="left:2022.80px;top:606.38px;font-family:'Liberation Mono';font-size:24.5px;color:#999999;letter-spacing:-1.303px;">14</span>
<span style="left:2022.80px;top:636.38px;font-family:'Liberation Mono';font-size:24.5px;color:#999999;letter-spacing:-1.303px;">15</span>
<span style="left:2022.80px;top:666.38px;font-family:'Liberation Mono';font-size:24.5px;color:#999999;letter-spacing:-1.303px;">16</span>
<span style="left:2022.80px;top:696.38px;font-family:'Liberation Mono';font-size:24.5px;color:#999999;letter-spacing:-1.303px;">17</span>
<span style="left:2022.80px;top:726.38px;font-family:'Liberation Mono';font-size:24.5px;color:#999999;letter-spacing:-1.303px;">18</span>
<span style="left:2022.80px;top:756.38px;font-family:'Liberation Mono';font-size:24.5px;color:#999999;letter-spacing:-1.303px;">19</span>
<span style="left:2022.80px;top:786.38px;font-family:'Liberation Mono';font-size:24.5px;color:#999999;letter-spacing:-1.303px;">20</span>
<span style="left:2022.80px;top:816.38px;font-family:'Liberation Mono';font-size:24.5px;color:#999999;letter-spacing:-1.303px;">21</span>
<span style="left:2022.80px;top:846.38px;font-family:'Liberation Mono';font-size:24.5px;color:#999999;letter-spacing:-1.303px;">22</span>
<span style="left:2022.80px;top:876.38px;font-family:'Liberation Mono';font-size:24.5px;color:#999999;letter-spacing:-1.303px;">23</span>
<span style="left:2022.80px;top:906.38px;font-family:'Liberation Mono';font-size:24.5px;color:#999999;letter-spacing:-1.303px;">24</span>
<span style="left:2022.80px;top:936.38px;font-family:'Liberation Mono';font-size:24.5px;color:#999999;letter-spacing:-1.303px;">25</span>
<span style="left:2022.80px;top:966.38px;font-family:'Liberation Mono';font-size:24.5px;color:#999999;letter-spacing:-1.303px;">26</span>
<span style="left:2135.30px;top:216.00px;font-family:'Liberation Mono';font-size:25px;color:#000080;font-weight:700;letter-spacing:-1.003px;-webkit-text-stroke:0.3px;">import</span>
<span style="left:2219.30px;top:216.00px;font-family:'Liberation Mono';font-size:25px;color:#000000;letter-spacing:-1.002px;-webkit-text-stroke:0.3px;"> org.jetbrains.kotlin.config.KotlinCompilerVersion</span>
<div style="left:2135px;top:213px;width:3.6px;height:26px;background:#000;"></div>
<span style="left:2135.30px;top:276.00px;font-family:'Liberation Mono';font-size:25px;color:#000000;letter-spacing:-1.004px;-webkit-text-stroke:0.3px;">plugins </span>
<span style="left:2247.30px;top:276.00px;font-family:'Liberation Mono';font-size:25px;color:#000000;font-weight:700;letter-spacing:-1.016px;-webkit-text-stroke:0.3px;">{</span>
<div style="left:2265.6px;top:275px;width:396.0px;height:22.5px;background:#f2f2f2;border-radius:8px;"></div>
<span style="left:2274.05px;top:274.88px;font-family:'Liberation Sans';font-size:22.5px;color:#858585;letter-spacing:0.317px;">this: PluginDependenciesSpecScope</span>
<span style="left:2191.30px;top:306.00px;font-family:'Liberation Mono';font-size:25px;color:#000000;letter-spacing:-1.005px;-webkit-text-stroke:0.3px;">id(</span>
<div style="left:2237.4px;top:305px;width:53.59999999999991px;height:22.5px;background:#f2f2f2;border-radius:8px;"></div>
<span style="left:2246.15px;top:304.88px;font-family:'Liberation Sans';font-size:22.5px;color:#858585;letter-spacing:1.490px;">p0:</span>
<span style="left:2295.30px;top:306.00px;font-family:'Liberation Mono';font-size:25px;color:#008000;font-weight:700;letter-spacing:-1.002px;-webkit-text-stroke:0.3px;">"com.android.application"</span>
<span style="left:2645.30px;top:306.00px;font-family:'Liberation Mono';font-size:25px;color:#000000;letter-spacing:-1.016px;-webkit-text-stroke:0.3px;">)</span>
<span style="left:2191.30px;top:336.00px;font-family:'Liberation Mono';font-size:25px;color:#000000;letter-spacing:-1.005px;-webkit-text-stroke:0.3px;">id(</span>
<div style="left:2237.4px;top:335px;width:53.59999999999991px;height:22.5px;background:#f2f2f2;border-radius:8px;"></div>
<span style="left:2246.15px;top:334.88px;font-family:'Liberation Sans';font-size:22.5px;color:#858585;letter-spacing:1.490px;">p0:</span>
<span style="left:2295.30px;top:336.00px;font-family:'Liberation Mono';font-size:25px;color:#008000;font-weight:700;letter-spacing:-1.003px;-webkit-text-stroke:0.3px;">"kotlin–android"</span>
<span style="left:2519.30px;top:336.00px;font-family:'Liberation Mono';font-size:25px;color:#000000;letter-spacing:-1.016px;-webkit-text-stroke:0.3px;">)</span>
<span style="left:2191.30px;top:366.00px;font-family:'Liberation Mono';font-size:25px;color:#000000;letter-spacing:-1.005px;-webkit-text-stroke:0.3px;">id(</span>
<div style="left:2237.4px;top:365px;width:53.59999999999991px;height:22.5px;background:#f2f2f2;border-radius:8px;"></div>
<span style="left:2246.15px;top:364.88px;font-family:'Liberation Sans';font-size:22.5px;color:#858585;letter-spacing:1.490px;">p0:</span>
<span style="left:2295.30px;top:366.00px;font-family:'Liberation Mono';font-size:25px;color:#008000;font-weight:700;letter-spacing:-1.003px;-webkit-text-stroke:0.3px;">"kotlin–android–extensions"</span>
<span style="left:2673.30px;top:366.00px;font-family:'Liberation Mono';font-size:25px;color:#000000;letter-spacing:-1.016px;-webkit-text-stroke:0.3px;">)</span>
<span style="left:2135.30px;top:396.00px;font-family:'Liberation Mono';font-size:25px;color:#000000;font-weight:700;letter-spacing:-1.016px;-webkit-text-stroke:0.3px;">}</span>
<span style="left:2135.30px;top:456.00px;font-family:'Liberation Mono';font-size:25px;color:#000000;font-style:italic;letter-spacing:-1.004px;-webkit-text-stroke:0.3px;">android</span>
<span style="left:2247.30px;top:456.00px;font-family:'Liberation Mono';font-size:25px;color:#000000;font-weight:700;letter-spacing:-1.016px;-webkit-text-stroke:0.3px;">{</span>
<div style="left:2265.6px;top:455px;width:213.4000000000001px;height:22.5px;background:#f2f2f2;border-radius:8px;"></div>
<span style="left:2274.05px;top:454.88px;font-family:'Liberation Sans';font-size:22.5px;color:#858585;letter-spacing:0.607px;">this: AppExtension</span>
<span style="left:2191.30px;top:486.00px;font-family:'Liberation Mono';font-size:25px;color:#000000;letter-spacing:-1.003px;-webkit-text-stroke:0.3px;">compileSdkVersion(</span>
<div style="left:2447.5px;top:485px;width:111.09999999999991px;height:22.5px;background:#f2f2f2;border-radius:8px;"></div>
<span style="left:2455.95px;top:484.88px;font-family:'Liberation Sans';font-size:22.5px;color:#858585;letter-spacing:0.486px;">apiLevel:</span>
<span style="left:2562.30px;top:486.00px;font-family:'Liberation Mono';font-size:25px;color:#0000ff;letter-spacing:-1.008px;-webkit-text-stroke:0.3px;">27</span>
<span style="left:2590.30px;top:486.00px;font-family:'Liberation Mono';font-size:25px;color:#000000;letter-spacing:-1.016px;-webkit-text-stroke:0.3px;">)</span>
<span style="left:2191.30px;top:516.00px;font-family:'Liberation Mono';font-size:25px;color:#000000;letter-spacing:-1.003px;-webkit-text-stroke:0.3px;">defaultConfig </span>
<span style="left:2387.30px;top:516.00px;font-family:'Liberation Mono';font-size:25px;color:#000000;font-weight:700;letter-spacing:-1.016px;-webkit-text-stroke:0.3px;">{</span>
<div style="left:2405.6px;top:515px;width:219.20000000000027px;height:22.5px;background:#f2f2f2;border-radius:8px;"></div>
<span style="left:2414.35px;top:514.88px;font-family:'Liberation Sans';font-size:22.5px;color:#858585;letter-spacing:0.587px;">this: DefaultConfig!</span>
<span style="left:2247.30px;top:546.00px;font-family:'Liberation Mono';font-size:25px;color:#660e7a;font-style:italic;letter-spacing:-1.004px;-webkit-text-stroke:0.3px;text-decoration:underline;text-decoration-color:#000;text-decoration-thickness:1.4px;text-underline-offset:2.4px;">applicationId</span>
<span style="left:2429.30px;top:546.00px;font-family:'Liberation Mono';font-size:25px;color:#000000;letter-spacing:-1.005px;-webkit-text-stroke:0.3px;"> = </span>
<span style="left:2471.30px;top:546.00px;font-family:'Liberation Mono';font-size:25px;color:#008000;font-weight:700;letter-spacing:-1.003px;-webkit-text-stroke:0.3px;">"org.gradle.kotlin.dsl.samples.</span>
<span style="left:2905.30px;top:546.00px;font-family:'Liberation Mono';font-size:25px;color:#008000;font-weight:700;letter-spacing:-1.004px;-webkit-text-stroke:0.3px;">androidstudio</span>
<span style="left:3087.30px;top:546.00px;font-family:'Liberation Mono';font-size:25px;color:#008000;font-weight:700;letter-spacing:-1.016px;-webkit-text-stroke:0.3px;">"</span>
<svg style="left:2907.8px;top:568.5px;" width="182.0" height="4" viewBox="0 0 182.0 4"><path d="M0 0.8 L3.5 3.2 L7.0 0.8 L10.5 3.2 L14.0 0.8 L17.5 3.2 L21.0 0.8 L24.5 3.2 L28.0 0.8 L31.5 3.2 L35.0 0.8 L38.5 3.2 L42.0 0.8 L45.5 3.2 L49.0 0.8 L52.5 3.2 L56.0 0.8 L59.5 3.2 L63.0 0.8 L66.5 3.2 L70.0 0.8 L73.5 3.2 L77.0 0.8 L80.5 3.2 L84.0 0.8 L87.5 3.2 L91.0 0.8 L94.5 3.2 L98.0 0.8 L101.5 3.2 L105.0 0.8 L108.5 3.2 L112.0 0.8 L115.5 3.2 L119.0 0.8 L122.5 3.2 L126.0 0.8 L129.5 3.2 L133.0 0.8 L136.5 3.2 L140.0 0.8 L143.5 3.2 L147.0 0.8 L150.5 3.2 L154.0 0.8 L157.5 3.2 L161.0 0.8 L164.5 3.2 L168.0 0.8 L171.5 3.2 L175.0 0.8 L178.5 3.2 L182.0 0.8" stroke="#9fcf9f" stroke-width="1.1" fill="none"/></svg>
<span style="left:2247.30px;top:576.00px;font-family:'Liberation Mono';font-size:25px;color:#000000;letter-spacing:-1.003px;-webkit-text-stroke:0.3px;">minSdkVersion(</span>
<div style="left:2447.5px;top:575px;width:179.0px;height:22.5px;background:#f2f2f2;border-radius:8px;"></div>
<span style="left:2455.95px;top:574.88px;font-family:'Liberation Sans';font-size:22.5px;color:#858585;letter-spacing:0.402px;">minSdkVersion:</span>
<span style="left:2631.00px;top:576.00px;font-family:'Liberation Mono';font-size:25px;color:#0000ff;letter-spacing:-1.008px;-webkit-text-stroke:0.3px;">15</span>
<span style="left:2659.00px;top:576.00px;font-family:'Liberation Mono';font-size:25px;color:#000000;letter-spacing:-1.016px;-webkit-text-stroke:0.3px;">)</span>
<span style="left:2247.30px;top:606.00px;font-family:'Liberation Mono';font-size:25px;color:#000000;letter-spacing:-1.003px;-webkit-text-stroke:0.3px;">targetSdkVersion(</span>
<div style="left:2489.8px;top:605px;width:202.5999999999999px;height:22.5px;background:#f2f2f2;border-radius:8px;"></div>
<span style="left:2498.25px;top:604.88px;font-family:'Liberation Sans';font-size:22.5px;color:#858585;letter-spacing:0.449px;">targetSdkVersion:</span>
<span style="left:2696.80px;top:606.00px;font-family:'Liberation Mono';font-size:25px;color:#0000ff;letter-spacing:-1.008px;-webkit-text-stroke:0.3px;">27</span>
<span style="left:2724.80px;top:606.00px;font-family:'Liberation Mono';font-size:25px;color:#000000;letter-spacing:-1.016px;-webkit-text-stroke:0.3px;">)</span>
<span style="left:2247.30px;top:636.00px;font-family:'Liberation Mono';font-size:25px;color:#660e7a;font-style:italic;letter-spacing:-1.003px;-webkit-text-stroke:0.3px;text-decoration:underline;text-decoration-color:#000;text-decoration-thickness:1.4px;text-underline-offset:2.4px;">versionCode</span>
<span style="left:2401.30px;top:636.00px;font-family:'Liberation Mono';font-size:25px;color:#000000;letter-spacing:-1.005px;-webkit-text-stroke:0.3px;"> = </span>
<span style="left:2443.30px;top:636.00px;font-family:'Liberation Mono';font-size:25px;color:#0000ff;letter-spacing:-1.016px;-webkit-text-stroke:0.3px;">1</span>
<span style="left:2247.30px;top:666.00px;font-family:'Liberation Mono';font-size:25px;color:#660e7a;font-style:italic;letter-spacing:-1.003px;-webkit-text-stroke:0.3px;text-decoration:underline;text-decoration-color:#000;text-decoration-thickness:1.4px;text-underline-offset:2.4px;">versionName</span>
<span style="left:2401.30px;top:666.00px;font-family:'Liberation Mono';font-size:25px;color:#000000;letter-spacing:-1.005px;-webkit-text-stroke:0.3px;"> = </span>
<span style="left:2443.30px;top:666.00px;font-family:'Liberation Mono';font-size:25px;color:#008000;font-weight:700;letter-spacing:-1.003px;-webkit-text-stroke:0.3px;">"1.0"</span>
<span style="left:2247.30px;top:696.00px;font-family:'Liberation Mono';font-size:25px;color:#660e7a;font-style:italic;letter-spacing:-1.002px;-webkit-text-stroke:0.3px;text-decoration:underline;text-decoration-color:#000;text-decoration-thickness:1.4px;text-underline-offset:2.4px;">testInstrumentationRunner</span>
<span style="left:2597.30px;top:696.00px;font-family:'Liberation Mono';font-size:25px;color:#000000;letter-spacing:-1.005px;-webkit-text-stroke:0.3px;"> = </span>
<span style="left:2639.30px;top:696.00px;font-family:'Liberation Mono';font-size:25px;color:#008000;font-weight:700;letter-spacing:-1.003px;-webkit-text-stroke:0.3px;">"android.support.test.runner.AndroidJUnitRunner"</span>
<span style="left:2191.30px;top:726.00px;font-family:'Liberation Mono';font-size:25px;color:#000000;font-weight:700;letter-spacing:-1.016px;-webkit-text-stroke:0.3px;">}</span>
<span style="left:2191.30px;top:756.00px;font-family:'Liberation Mono';font-size:25px;color:#000000;letter-spacing:-1.003px;-webkit-text-stroke:0.3px;">buildTypes </span>
<span style="left:2345.30px;top:756.00px;font-family:'Liberation Mono';font-size:25px;color:#000000;font-weight:700;letter-spacing:-1.016px;-webkit-text-stroke:0.3px;">{</span>
<div style="left:2363.3px;top:755px;width:533.0px;height:22.5px;background:#f2f2f2;border-radius:8px;"></div>
<span style="left:2372.05px;top:754.88px;font-family:'Liberation Sans';font-size:22.5px;color:#858585;letter-spacing:0.377px;">this: NamedDomainObjectContainer&lt;BuildType!&gt;!</span>
<span style="left:2247.30px;top:786.00px;font-family:'Liberation Mono';font-size:25px;color:#000000;letter-spacing:-1.003px;-webkit-text-stroke:0.3px;">getByName(</span>
<div style="left:2391.5px;top:785px;width:81.30000000000018px;height:22.5px;background:#f2f2f2;border-radius:8px;"></div>
<span style="left:2399.85px;top:784.88px;font-family:'Liberation Sans';font-size:22.5px;color:#858585;letter-spacing:0.241px;">name:</span>
<span style="left:2477.00px;top:786.00px;font-family:'Liberation Mono';font-size:25px;color:#008000;font-weight:700;letter-spacing:-1.003px;-webkit-text-stroke:0.3px;">"release"</span>
<span style="left:2603.00px;top:786.00px;font-family:'Liberation Mono';font-size:25px;color:#000000;letter-spacing:-1.008px;-webkit-text-stroke:0.3px;">) </span>
<span style="left:2631.00px;top:786.00px;font-family:'Liberation Mono';font-size:25px;color:#000000;font-weight:700;letter-spacing:-1.016px;-webkit-text-stroke:0.3px;">{</span>
<div style="left:2649.7px;top:785px;width:181.20000000000027px;height:22.5px;background:#f2f2f2;border-radius:8px;"></div>
<span style="left:2658.45px;top:784.88px;font-family:'Liberation Sans';font-size:22.5px;color:#858585;letter-spacing:0.667px;">this: BuildType!</span>
<span style="left:2303.30px;top:816.00px;font-family:'Liberation Mono';font-size:25px;color:#660e7a;font-style:italic;letter-spacing:-1.003px;-webkit-text-stroke:0.3px;text-decoration:underline;text-decoration-color:#000;text-decoration-thickness:1.4px;text-underline-offset:2.4px;">isMinifyEnabled</span>
<span style="left:2513.30px;top:816.00px;font-family:'Liberation Mono';font-size:25px;color:#000000;letter-spacing:-1.005px;-webkit-text-stroke:0.3px;"> = </span>
<span style="left:2555.30px;top:816.00px;font-family:'Liberation Mono';font-size:25px;color:#000080;font-weight:700;letter-spacing:-1.003px;-webkit-text-stroke:0.3px;">false</span>
<span style="left:2303.30px;top:846.00px;font-family:'Liberation Mono';font-size:25px;color:#000000;letter-spacing:-1.003px;-webkit-text-stroke:0.3px;">proguardFiles(getDefaultProguardFile(</span>
<div style="left:2825.8px;top:845px;width:81.19999999999982px;height:22.5px;background:#f2f2f2;border-radius:8px;"></div>
<span style="left:2833.85px;top:844.88px;font-family:'Liberation Sans';font-size:22.5px;color:#858585;letter-spacing:0.341px;">name:</span>
<span style="left:2911.00px;top:846.00px;font-family:'Liberation Mono';font-size:25px;color:#008000;font-weight:700;letter-spacing:-1.003px;-webkit-text-stroke:0.3px;">"proguard–android.txt"</span>
<span style="left:3219.00px;top:846.00px;font-family:'Liberation Mono';font-size:25px;color:#000000;letter-spacing:-1.005px;-webkit-text-stroke:0.3px;">), </span>
<span style="left:3261.00px;top:846.00px;font-family:'Liberation Mono';font-size:25px;color:#008000;font-weight:700;letter-spacing:-1.003px;-webkit-text-stroke:0.3px;">"proguard–rules.pro"</span>
<span style="left:3541.00px;top:846.00px;font-family:'Liberation Mono';font-size:25px;color:#000000;letter-spacing:-1.016px;-webkit-text-stroke:0.3px;">)</span>
<span style="left:2247.30px;top:876.00px;font-family:'Liberation Mono';font-size:25px;color:#000000;font-weight:700;letter-spacing:-1.016px;-webkit-text-stroke:0.3px;">}</span>
<span style="left:2191.30px;top:906.00px;font-family:'Liberation Mono';font-size:25px;color:#000000;font-weight:700;letter-spacing:-1.016px;-webkit-text-stroke:0.3px;">}</span>
<span style="left:2135.30px;top:936.00px;font-family:'Liberation Mono';font-size:25px;color:#000000;font-weight:700;letter-spacing:-1.016px;-webkit-text-stroke:0.3px;">}</span>
<div style="left:2194.3px;top:541px;width:1.8px;height:180px;background:#d9d9d9;"></div>
<div style="left:2194.3px;top:781px;width:1.8px;height:120px;background:#d9d9d9;"></div>
<div style="left:2250.3px;top:811px;width:1.8px;height:60px;background:#d9d9d9;"></div>
<svg style="left:2114.2px;top:218.5px;" width="18" height="21" viewBox="0 0 18 21"><path d="M1 1 H17 V12.6 L9.0 20 L1 12.6 Z" fill="#ffffff" stroke="#d0d0d0" stroke-width="2"/><path d="M4.5 7.98 H13.5" stroke="#d0d0d0" stroke-width="1.8"/></svg>
<svg style="left:2114.2px;top:278.5px;" width="18" height="21" viewBox="0 0 18 21"><path d="M1 1 H17 V12.6 L9.0 20 L1 12.6 Z" fill="#ffffff" stroke="#d0d0d0" stroke-width="2"/><path d="M4.5 7.98 H13.5" stroke="#d0d0d0" stroke-width="1.8"/></svg>
<svg style="left:2114.2px;top:458.5px;" width="18" height="21" viewBox="0 0 18 21"><path d="M1 1 H17 V12.6 L9.0 20 L1 12.6 Z" fill="#ffffff" stroke="#d0d0d0" stroke-width="2"/><path d="M4.5 7.98 H13.5" stroke="#d0d0d0" stroke-width="1.8"/></svg>
<svg style="left:2114.2px;top:518.5px;" width="18" height="21" viewBox="0 0 18 21"><path d="M1 1 H17 V12.6 L9.0 20 L1 12.6 Z" fill="#ffffff" stroke="#d0d0d0" stroke-width="2"/><path d="M4.5 7.98 H13.5" stroke="#d0d0d0" stroke-width="1.8"/></svg>
<svg style="left:2114.2px;top:758.5px;" width="18" height="21" viewBox="0 0 18 21"><path d="M1 1 H17 V12.6 L9.0 20 L1 12.6 Z" fill="#ffffff" stroke="#d0d0d0" stroke-width="2"/><path d="M4.5 7.98 H13.5" stroke="#d0d0d0" stroke-width="1.8"/></svg>
<svg style="left:2114.2px;top:788.5px;" width="18" height="21" viewBox="0 0 18 21"><path d="M1 1 H17 V12.6 L9.0 20 L1 12.6 Z" fill="#ffffff" stroke="#d0d0d0" stroke-width="2"/><path d="M4.5 7.98 H13.5" stroke="#d0d0d0" stroke-width="1.8"/></svg>
<svg style="left:2114.2px;top:395.9px;" width="18" height="21" viewBox="0 0 18 21"><path d="M1 20 H17 V8.4 L9.0 1 L1 8.4 Z" fill="#ffffff" stroke="#d0d0d0" stroke-width="2"/><path d="M4.5 13.02 H13.5" stroke="#d0d0d0" stroke-width="1.8"/></svg>
<svg style="left:2114.2px;top:725.9px;" width="18" height="21" viewBox="0 0 18 21"><path d="M1 20 H17 V8.4 L9.0 1 L1 8.4 Z" fill="#ffffff" stroke="#d0d0d0" stroke-width="2"/><path d="M4.5 13.02 H13.5" stroke="#d0d0d0" stroke-width="1.8"/></svg>
<svg style="left:2114.2px;top:875.9px;" width="18" height="21" viewBox="0 0 18 21"><path d="M1 20 H17 V8.4 L9.0 1 L1 8.4 Z" fill="#ffffff" stroke="#d0d0d0" stroke-width="2"/><path d="M4.5 13.02 H13.5" stroke="#d0d0d0" stroke-width="1.8"/></svg>
<svg style="left:2114.2px;top:905.9px;" width="18" height="21" viewBox="0 0 18 21"><path d="M1 20 H17 V8.4 L9.0 1 L1 8.4 Z" fill="#ffffff" stroke="#d0d0d0" stroke-width="2"/><path d="M4.5 13.02 H13.5" stroke="#d0d0d0" stroke-width="1.8"/></svg>
<svg style="left:2114.2px;top:935.9px;" width="18" height="21" viewBox="0 0 18 21"><path d="M1 20 H17 V8.4 L9.0 1 L1 8.4 Z" fill="#ffffff" stroke="#d0d0d0" stroke-width="2"/><path d="M4.5 13.02 H13.5" stroke="#d0d0d0" stroke-width="1.8"/></svg>
<div class="w" style="left:2124px;top:994px;width:1400px;height:3px;"><span style="left:12px;top:2.2px;font-family:'Liberation Mono';font-size:25px;letter-spacing:-1px;color:#555;font-style:italic">dependencies { this: DependencyHandlerScope</span></div>
<div style="left:2012px;top:997px;width:1569px;height:44.5px;background:#efefef;"></div>
<div style="left:2012px;top:996.8px;width:1569px;height:1.8px;background:#e0e0e0;"></div>
<div style="left:1971px;top:1041.5px;width:1652px;height:46px;background:#ececec;"></div>
<div style="left:1971px;top:1041px;width:1652px;height:1.4px;background:#c8c8c8;"></div>
<svg style="left:2034.5px;top:1058.8px;" width="23" height="17" viewBox="0 0 23 17"><path d="M0 1.8 H22.5 M0 8.5 H14.5 M0 15.2 H18.5" stroke="#5a5a5a" stroke-width="3.6"/></svg>
<span style="left:2065.62px;top:1054.35px;font-family:'Liberation Sans';font-size:23px;color:#1a1a1a;letter-spacing:0.351px;">6: Logcat</span>
<div style="left:2067.5px;top:1075.8px;width:12px;height:1.7px;background:#1a1a1a;"></div>
<svg style="left:2203px;top:1053px;" width="27" height="27" viewBox="0 0 27 27"><circle cx="16" cy="14" r="7.5" fill="#f0b27a"/><path d="M8 12 C9 4 24 4 25 13 L21 10 L12 10 Z" fill="#5a5a5a"/><path d="M7 26 C7 19 25 19 25 26 Z" fill="#3d8fd1"/><circle cx="6.5" cy="6" r="5.6" fill="#fff" stroke="#8a8a8a" stroke-width="1.2"/><path d="M3.5 4.5 H9.5 M3.5 6.5 H9.5 M3.5 8.5 H8" stroke="#8a8a8a" stroke-width="0.9"/></svg>
<span style="left:2236.52px;top:1054.35px;font-family:'Liberation Sans';font-size:23px;color:#1a1a1a;letter-spacing:-0.758px;">TODO</span>
<svg style="left:2338.5px;top:1053px;" width="27" height="26" viewBox="0 0 27 26"><rect x="1" y="1" width="25" height="24" fill="#ececec" stroke="#555" stroke-width="1.8"/><rect x="3.5" y="7" width="20" height="15.5" fill="#555"/><path d="M6.5 11 L11 14.5 L6.5 18 M12.5 19 H19" stroke="#fff" stroke-width="1.7" fill="none"/></svg>
<span style="left:2372.92px;top:1054.35px;font-family:'Liberation Sans';font-size:23px;color:#1a1a1a;letter-spacing:0.360px;">Terminal</span>
<svg style="left:2503px;top:1052.5px;" width="16" height="27" viewBox="0 0 16 27"><path d="M5.8 0 H10.2 V15 H16 L8 26.5 L0 15 H5.8 Z" fill="#54b045"/></svg>
<span style="left:2517.00px;top:1052.15px;font-family:'Liberation Sans';font-size:11px;color:#7d7d7d;font-weight:700;letter-spacing:0.375px;">01</span>
<span style="left:2517.00px;top:1062.15px;font-family:'Liberation Sans';font-size:11px;color:#7d7d7d;font-weight:700;letter-spacing:0.375px;">10</span>
<span style="left:2536.52px;top:1054.35px;font-family:'Liberation Sans';font-size:23px;color:#1a1a1a;letter-spacing:0.149px;">Build</span>
<svg style="left:3418.5px;top:1050.5px;" width="34" height="30" viewBox="0 0 34 30"><ellipse cx="15.6" cy="13.6" rx="15.2" ry="13.2" fill="#82cb87"/><path d="M20 24 C25 27 28 28.3 32.5 28.3 C29.5 25.5 28.5 22 28.8 18 Z" fill="#82cb87"/></svg>
<span style="left:3429.60px;top:1054.22px;font-family:'Liberation Sans';font-size:19.5px;color:#333333;font-weight:700;letter-spacing:0.541px;">1</span>
<span style="left:3458.65px;top:1054.17px;font-family:'Liberation Sans';font-size:22.5px;color:#1a1a1a;letter-spacing:0.091px;">Event Log</span>
<div style="left:1971px;top:1087.5px;width:1652px;height:41.5px;background:#ececec;"></div>
<div style="left:1971px;top:1086.8px;width:1652px;height:1.2px;background:#c9c9c9;"></div>
<svg style="left:1980.5px;top:1094.5px;" width="29" height="28" viewBox="0 0 29 28"><rect x="1" y="1" width="27" height="22" fill="#c9c9c9" stroke="#6e6e6e" stroke-width="1.6"/><path d="M0 27 H29" stroke="#6e6e6e" stroke-width="1.6"/></svg>
<span style="left:2032.62px;top:1097.85px;font-family:'Liberation Sans';font-size:23px;color:#1a1a1a;letter-spacing:0.022px;">Unregistered VCS r... (5 minutes ago)</span>
<svg style="left:2428.5px;top:1095.5px;" width="26" height="26" viewBox="0 0 26 26"><path d="M13.0 7.5 L13.0 0.5" stroke="rgb(105,105,105)" stroke-width="2" stroke-linecap="round"/><path d="M15.8 8.2 L19.2 2.2" stroke="rgb(116,116,116)" stroke-width="2" stroke-linecap="round"/><path d="M17.8 10.2 L23.8 6.8" stroke="rgb(127,127,127)" stroke-width="2" stroke-linecap="round"/><path d="M18.5 13.0 L25.5 13.0" stroke="rgb(138,138,138)" stroke-width="2" stroke-linecap="round"/><path d="M17.8 15.8 L23.8 19.2" stroke="rgb(149,149,149)" stroke-width="2" stroke-linecap="round"/><path d="M15.8 17.8 L19.2 23.8" stroke="rgb(160,160,160)" stroke-width="2" stroke-linecap="round"/><path d="M13.0 18.5 L13.0 25.5" stroke="rgb(171,171,171)" stroke-width="2" stroke-linecap="round"/><path d="M10.3 17.8 L6.8 23.8" stroke="rgb(182,182,182)" stroke-width="2" stroke-linecap="round"/><path d="M8.2 15.8 L2.2 19.2" stroke="rgb(193,193,193)" stroke-width="2" stroke-linecap="round"/><path d="M7.5 13.0 L0.5 13.0" stroke="rgb(204,204,204)" stroke-width="2" stroke-linecap="round"/><path d="M8.2 10.2 L2.2 6.7" stroke="rgb(215,215,215)" stroke-width="2" stroke-linecap="round"/><path d="M10.2 8.2 L6.7 2.2" stroke="rgb(226,226,226)" stroke-width="2" stroke-linecap="round"/></svg>
<span style="left:2460.42px;top:1097.85px;font-family:'Liberation Sans';font-size:23px;color:#1a1a1a;letter-spacing:0.223px;">Downloading plugins</span>
<div style="left:2713px;top:1105.5px;width:292px;height:8px;background:#d2d2d2;border-radius:4px;"></div>
<div style="left:2713px;top:1105.5px;width:133.5px;height:8px;background:#9a9a9a;border-radius:4px;"></div>
<svg style="left:3009.5px;top:1097px;" width="24" height="24" viewBox="0 0 24 24"><circle cx="12" cy="12" r="12" fill="#b4b4b4"/><path d="M6.5 6.5 L17.5 17.5 M17.5 6.5 L6.5 17.5" stroke="#fff" stroke-width="2.2"/></svg>
<span style="left:3053.62px;top:1097.85px;font-family:'Liberation Sans';font-size:23px;color:#1a1a1a;letter-spacing:-1.228px;">1:1</span>
<span style="left:3102.22px;top:1097.85px;font-family:'Liberation Sans';font-size:23px;color:#1a1a1a;letter-spacing:-0.672px;">LF</span>
<svg style="left:3129.5px;top:1101.0px;" width="9.5" height="16" viewBox="0 0 9.5 16"><path d="M0 6.72 L4.75 0 L9.5 6.72 Z M0 9.28 L4.75 16 L9.5 9.28 Z" fill="#4a4a4a"/></svg>
<span style="left:3160.62px;top:1097.85px;font-family:'Liberation Sans';font-size:23px;color:#1a1a1a;letter-spacing:0.126px;">UTF-8</span>
<svg style="left:3229.5px;top:1101.0px;" width="9.5" height="16" viewBox="0 0 9.5 16"><path d="M0 6.72 L4.75 0 L9.5 6.72 Z M0 9.28 L4.75 16 L9.5 9.28 Z" fill="#4a4a4a"/></svg>
<span style="left:3256.62px;top:1097.85px;font-family:'Liberation Sans';font-size:23px;color:#9a9a9a;letter-spacing:0.060px;">Context: &lt;no context&gt;</span>
<svg style="left:3533.4px;top:1098.3px;" width="24" height="24" viewBox="1570 1098 24 24"><path d="M1573.4 1107 V1104.6 C1573.4 1100.4 1580.4 1100.4 1580.4 1104.6 V1107.6" stroke="#7a7a7a" stroke-width="2.3" fill="none"/><rect x="1576.1" y="1107.3" width="13.8" height="11.3" rx="2.6" fill="#7a7a7a"/><path d="M1579.9 1111.4 H1586.1 M1583 1111.4 V1116.2" stroke="#ececec" stroke-width="1.9"/></svg>
<svg style="left:3582.5px;top:1094.5px;" width="26" height="29" viewBox="0 0 26 29"><path d="M7 9 V3 C7 1 8 0.8 10 0.8 H16 C18 0.8 19 1 19 3 V9" stroke="#6e6e6e" stroke-width="2" fill="none"/><circle cx="13" cy="5.5" r="1.7" fill="#6e6e6e"/><path d="M0.5 10 H25.5" stroke="#6e6e6e" stroke-width="2.2"/><path d="M4.5 11 V18 C4.5 25 21.5 25 21.5 18 V11" stroke="#6e6e6e" stroke-width="2" fill="none"/><path d="M7.5 14 H11.5 M14.5 14 H18.5" stroke="#6e6e6e" stroke-width="2.4"/><path d="M8.5 20.5 C10 17.5 16 17.5 17.5 20.5" stroke="#6e6e6e" stroke-width="2.4" fill="none"/><path d="M5 28 L9 24.5 H17 L21 28 Z" fill="#6e6e6e"/></svg>
<span style="left:1980.60px;top:269.92px;font-family:'Liberation Sans';font-size:22px;color:#1a1a1a;letter-spacing:0.226px;transform-origin:0 0;transform:rotate(-90deg);">1: Project</span>
<span style="left:1980.60px;top:466.12px;font-family:'Liberation Sans';font-size:22px;color:#1a1a1a;letter-spacing:0.465px;transform-origin:0 0;transform:rotate(-90deg);">Z: Structure</span>
<span style="left:1980.60px;top:634.32px;font-family:'Liberation Sans';font-size:22px;color:#1a1a1a;letter-spacing:0.565px;transform-origin:0 0;transform:rotate(-90deg);">Captures</span>
<span style="left:1980.60px;top:854.72px;font-family:'Liberation Sans';font-size:22px;color:#1a1a1a;letter-spacing:0.535px;transform-origin:0 0;transform:rotate(-90deg);">Build Variants</span>
<div class="w" style="left:1971px;top:900px;width:40px;height:141px;">
<span style="left:9.80px;top:152.82px;font-family:'Liberation Sans';font-size:22px;color:#1a1a1a;letter-spacing:0.272px;transform-origin:0 0;transform:rotate(-90deg);">2: Favorites</span>
</div>
<div style="left:2001.2px;top:257.5px;width:1.7px;height:11.3px;background:#1a1a1a;"></div>
<div style="left:2001.2px;top:451.5px;width:1.7px;height:13.3px;background:#1a1a1a;"></div>
<svg style="left:1980px;top:276.5px;" width="24" height="27" viewBox="0 0 24 27"><circle cx="12" cy="12" r="11.2" fill="#7cb850"/><path d="M11.5 12 L3.5 25 M12.5 12 L20.5 25" stroke="#f4f4f4" stroke-width="1.7" fill="none"/><path d="M6.5 17.5 Q12 21.5 17.5 17.5" stroke="#f4f4f4" stroke-width="1.6" fill="none"/><circle cx="12" cy="10.3" r="2.6" fill="none" stroke="#6d6d6d" stroke-width="2"/><rect x="11" y="5" width="2" height="3.2" fill="#6d6d6d"/></svg>
<svg style="left:1978px;top:472px;" width="28" height="28" viewBox="1978 472 28 28"><rect x="1981" y="475" width="8" height="8" fill="#d19a3e"/><g fill="#99a6af"><rect x="1995.1" y="475" width="8" height="8"/><rect x="1981" y="489" width="8" height="8"/><rect x="1995.1" y="489" width="8" height="8"/></g><path d="M1990.3 481.3 L1993.6 476.8 M1990.3 495.3 L1993.6 490.8 M1982.5 484.3 L1987.4 487.5 M1996.6 484.3 L2001.7 487.5" stroke="#55656e" stroke-width="1.7" stroke-linecap="round"/></svg>
<svg style="left:1978px;top:640px;" width="28" height="32" viewBox="1978 640 28 32"><circle cx="1991.9" cy="657.5" r="9.7" fill="#f6f6f6" stroke="#8c8c8c" stroke-width="2.7"/><circle cx="1991.9" cy="657.5" r="6.8" fill="#7fc3ea"/><path d="M1991.9 657.5 L1995.7 653.7" stroke="#444" stroke-width="1.5" stroke-linecap="round"/><circle cx="1991.9" cy="657.5" r="1.7" fill="#444"/><rect x="1990.1" y="643" width="3.6" height="4.6" fill="#8c8c8c"/><path d="M1980.7 648.8 L1984.3 652.3" stroke="#8c8c8c" stroke-width="2.6"/></svg>
<svg style="left:1980px;top:864px;" width="25" height="26" viewBox="0 0 25 26"><g fill="#8fbf3a"><path d="M5 8 C5 1.5 20 1.5 20 8 Z"/><rect x="5" y="9.3" width="15" height="11.5" rx="1.5"/><rect x="0.5" y="9.3" width="3.4" height="9" rx="1.7"/><rect x="21.1" y="9.3" width="3.4" height="9" rx="1.7"/><rect x="7.5" y="19" width="3.6" height="7" rx="1.7"/><rect x="13.9" y="19" width="3.6" height="7" rx="1.7"/></g><path d="M8 3 L6.3 0.3 M17 3 L18.7 0.3" stroke="#8fbf3a" stroke-width="1.1"/><circle cx="9" cy="5.2" r="0.9" fill="#fff"/><circle cx="16" cy="5.2" r="0.9" fill="#fff"/></svg>
<svg style="left:3589px;top:176.7px;" width="26" height="26" viewBox="0 0 26 26"><path d="M23.96 12.04 A11 11 0 1 1 11.47 2.11" stroke="#9dcb63" stroke-width="4" fill="none"/><path d="M12.62 2.01 A11 11 0 0 1 23.63 10.15" stroke="#259d58" stroke-width="4" fill="none"/><circle cx="12.5" cy="13" r="4.6" fill="#259d58"/></svg>
<span style="left:3612.60px;top:210.68px;font-family:'Liberation Sans';font-size:22px;color:#1a1a1a;letter-spacing:0.442px;transform-origin:0 0;transform:rotate(90deg);">Gradle</span>
<svg style="left:3593px;top:779px;" width="19" height="25" viewBox="0 0 19 25"><rect x="1.6" y="1.6" width="15.8" height="21.8" rx="2.5" fill="#ececec" stroke="#555555" stroke-width="3.2"/><rect x="3.2" y="18.5" width="12.6" height="3.6" fill="#555555"/><path d="M6.8 20.8 H12.2" stroke="#ffffff" stroke-width="1.5"/></svg>
<span style="left:3612.60px;top:812.68px;font-family:'Liberation Sans';font-size:22px;color:#1a1a1a;letter-spacing:0.383px;transform-origin:0 0;transform:rotate(90deg);">Device File Explorer</span>
</body></html>
